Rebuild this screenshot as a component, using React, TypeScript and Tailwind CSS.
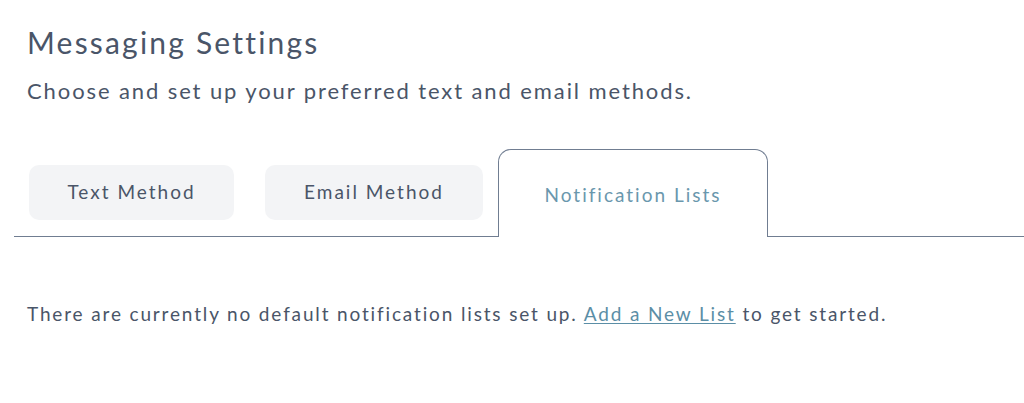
const TABS = ['Text Method', 'Email Method'];

export default function App() {
  return (
    <div className="w-[1024px] h-[403px] bg-white font-['Lato',sans-serif] text-[#4a5568]">
      <div className="pt-[24px]">
        <h1 className="pl-[27px] text-[30px] leading-[36px] tracking-[2.2px]">Messaging Settings</h1>
        <p className="pl-[27px] mt-[17px] text-[22px] leading-[28px] tracking-[1.9px]">
          Choose and set up your preferred text and email methods.
        </p>

        <div className="ml-[14px] mt-[44px] flex items-end border-b border-[#707d91]">
          {TABS.map((t, i) => (
            <div
              key={t}
              className={`mb-[16px] ${i === 0 ? 'ml-[15px] w-[205px]' : 'ml-[31px] w-[218px]'} h-[55px] rounded-[10px] bg-[#f3f4f6] flex items-center justify-center text-[19px] tracking-[2px] text-[#4a5568]`}
            >
              {t}
            </div>
          ))}
          <div className="ml-[15px] -mb-px w-[270px] h-[88px] pt-[4px] rounded-t-[13px] border border-b-0 border-[#707d91] bg-white flex items-center justify-center text-[19px] tracking-[2px] text-[#6a97ad]">
            Notification Lists
          </div>
        </div>

        <p className="pl-[27px] mt-[65px] text-[19px] leading-[24px] tracking-[1.85px]">
          There are currently no default notification lists set up.{' '}
          <a href="#" className="text-[#5b8ea6] underline underline-offset-2">Add a New List</a> to get started.
        </p>
      </div>
    </div>
  );
}
